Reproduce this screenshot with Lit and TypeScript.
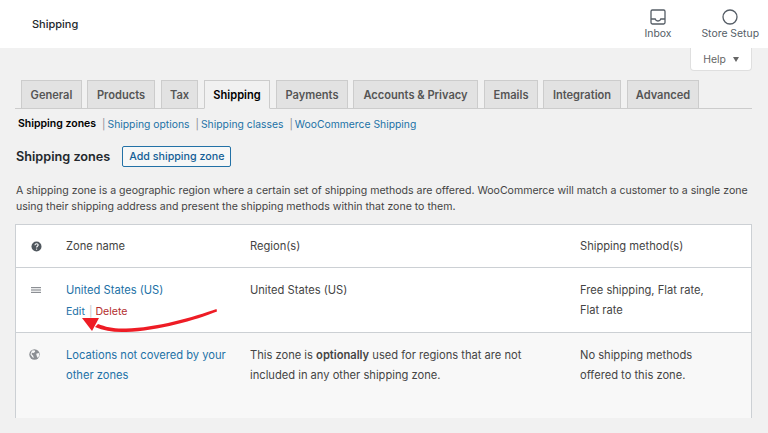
import { LitElement, html, css } from "lit";
import { customElement } from "lit/decorators.js";

@customElement("app-root")
export class AppRoot extends LitElement {
  static styles = css`
    :host { display: block; width: 768px; height: 433px; overflow: hidden; position: relative; background: #f1f1f1; font-family: Inter, "Liberation Sans", sans-serif; font-size: 11.15px; color: #444; -webkit-font-smoothing: antialiased; }
    a { color: #2271a6; text-decoration: none; }
    .top { height: 48px; background: #fff; display: flex; align-items: flex-start; padding-left: 32px; box-sizing: border-box; }
    .title { font-size: 11px; font-weight: 500; color: #23282d; margin-top: 17px; line-height: 14px; flex: 1; }
    .act { display: flex; flex-direction: column; align-items: center; color: #555d66; font-size: 10.4px; line-height: 13px; padding-top: 9px; gap: 2px; }
    .act svg { display: block; width: 16px; height: 16px; }
    .inbox { margin-right: 30px; }
    .setup { margin-right: 9px; }
    .helpwrap { display: flex; justify-content: flex-end; padding-right: 16px; height: 32px; }
    .help { width: 62px; height: 23px; box-sizing: border-box; background: #fff; border: 1px solid #dfdfdf; border-top: 0; border-radius: 0 0 4px 4px; display: flex; align-items: center; justify-content: center; gap: 7px; color: #666; font-size: 10.4px; }
    .caret { width: 0; height: 0; border-left: 3.5px solid transparent; border-right: 3.5px solid transparent; border-top: 5px solid #666; }
    .tabs { display: flex; margin: 0 16px 0 15px; padding-left: 6px; border-bottom: 1px solid #ccc; height: 28px; }
    .tab { height: 28px; box-sizing: border-box; background: #e2e2e2; border: 1px solid #ccc; border-bottom: 0; display: flex; align-items: center; justify-content: center; color: #555; font-size: 11.1px; font-weight: 600; }
    .tab.on { background: #f1f1f1; color: #000; height: 29px; border-bottom: 1px solid #f1f1f1; }
    .sub { display: flex; margin: 8px 0 0 18px; font-size: 10.35px; line-height: 14px; white-space: nowrap; }
    .sub b { font-weight: 600; color: #000; font-size: 10.5px; }
    .sep { color: #8c8f94; margin: 0 2px 0 6px; }
    .h { display: flex; align-items: center; margin: 15px 0 0 16px; gap: 12px; height: 21px; }
    .h h2 { margin: 0; font-size: 12.7px; font-weight: 600; color: #23282d; }
    .btn { height: 21px; box-sizing: border-box; width: 109px; border: 1px solid #2271a6; border-radius: 2px; background: #f6f7f7; color: #135e96; font-size: 10.7px; font-weight: 500; display: flex; align-items: center; justify-content: center; }
    .p { margin: 16px 16px 0 16px; font-size: 10.55px; line-height: 15.5px; white-space: nowrap; }
    .table { margin: 10px 16px 0 15px; height: 194px; box-sizing: border-box; border: 1px solid #ccd0d4; background: #fff; }
    .row { display: grid; grid-template-columns: 50px 184px 330px 1fr; }
    .row > div { box-sizing: border-box; }
    .head { height: 42px; align-items: center; border-bottom: 1px solid #ccd0d4; }
    .ic { padding-left: 15px; display: flex; }
    .ic svg { display: block; }
    .us { height: 65px; border-bottom: 1px solid #ccd0d4; line-height: 20px; padding-top: 12px; box-sizing: border-box; }
    .rows { font-size: 10.6px; margin-top: 5px; line-height: 14px; display: flex; align-items: center; }
    .rows i { font-style: normal; color: #c3c4c7; margin: 0 3px 0 4px; }
    .rows .del { color: #b32d2e; }
    .rest { height: 85px; background: #f8f8f8; line-height: 19.6px; padding-top: 13px; box-sizing: border-box; }
    .rest b { font-weight: 600; }
    .nw { white-space: nowrap; }
    .menu { padding-top: 7px; align-items: flex-start; }
    .globe { padding-left: 13px; padding-top: 3px; align-items: flex-start; }
    .arrow { position: absolute; left: 76px; top: 305px; width: 145px; height: 30px; pointer-events: none; }
  `;

  render() {
    const tabs: [string, number, number][] = [["General",61,5],["Products",68,6],["Tax",37,6],["Shipping",66,6],["Payments",72,5],["Accounts & Privacy",125,6],["Emails",54,5],["Integration",78,6],["Advanced",72,0]];
    return html`
      <div class="top">
        <div class="title">Shipping</div>
        <div class="act inbox">
          <svg viewBox="0 0 16 16" fill="none" stroke="#555d66" stroke-width="1.3"><rect x="1" y="1" width="14" height="14" rx="1.4"/><path d="M1 10h4.2c.4 1.3 1.5 2 2.8 2s2.4-.7 2.8-2H15"/></svg>
          <span>Inbox</span>
        </div>
        <div class="act setup">
          <svg viewBox="0 0 16 16" fill="none" stroke="#555d66" stroke-width="1.3"><circle cx="8" cy="8" r="7"/></svg>
          <span>Store Setup</span>
        </div>
      </div>
      <div class="helpwrap"><div class="help"><span>Help</span><span class="caret"></span></div></div>
      <div class="tabs">
        ${tabs.map(([t,w,g])=>html`<div class="tab ${t==="Shipping"?"on":""}" style="width:${w}px;margin-right:${g}px">${t}</div>`)}
      </div>
      <div class="sub">
        <b>Shipping zones</b><span class="sep">|</span><a>Shipping options</a><span class="sep">|</span><a>Shipping classes</a><span class="sep">|</span><a>WooCommerce Shipping</a>
      </div>
      <div class="h"><h2>Shipping zones</h2><div class="btn">Add shipping zone</div></div>
      <div class="p">A shipping zone is a geographic region where a certain set of shipping methods are offered. WooCommerce will match a customer to a single zone<br>using their shipping address and present the shipping methods within that zone to them.</div>
      <div class="table">
        <div class="row head">
          <div class="ic"><svg width="11" height="11" viewBox="0 0 11 11"><circle cx="5.5" cy="5.5" r="5" fill="#50575e"/><path d="M3.9 4.2c.1-1 .8-1.5 1.7-1.5s1.6.6 1.6 1.4c0 1.2-1.6 1.2-1.6 2.4" fill="none" stroke="#fff" stroke-width="1.1"/><circle cx="5.6" cy="8.1" r=".7" fill="#fff"/></svg></div>
          <div>Zone name</div><div>Region(s)</div><div>Shipping method(s)</div>
        </div>
        <div class="row us">
          <div class="ic menu"><svg width="10" height="6" viewBox="0 0 10 6" fill="#8c8f94"><rect width="10" height="1.2"/><rect y="2.4" width="10" height="1.2"/><rect y="4.8" width="10" height="1.2"/></svg></div>
          <div><a>United States (US)</a><div class="rows"><a>Edit</a><i>|</i><a class="del">Delete</a></div></div>
          <div>United States (US)</div>
          <div>Free shipping, Flat rate,<br>Flat rate</div>
        </div>
        <div class="row rest">
          <div class="ic globe"><svg width="11" height="11" viewBox="0 0 11 11"><circle cx="5.5" cy="5.5" r="5.2" fill="#8c8f94"/><path d="M3 1.6l2.6-.4.6 1.5-1.6 1.4-1.3-.4-.9 1.4 1.8 1.6.6 2.2-1.4-.6-2-3zM7.2 4.7l2.6-.7.6 2.6-1.6 2.4-1-1.7z" fill="#f8f8f8"/></svg></div>
          <div><a class="nw">Locations not covered by your</a><br><a>other zones</a></div>
          <div class="nw">This zone is <b>optionally</b> used for regions that are not<br>included in any other shipping zone.</div>
          <div class="nw">No shipping methods<br>offered to this zone.</div>
        </div>
      </div>
      <svg class="arrow" viewBox="0 0 145 30"><path d="M140.5 4 C118 12 80 23 50 23.5 C38 24 30 22 22 19 L19 22 C28 26 38 27.5 50 27 C82 26 120 15 141 6.5 Z" fill="#ee1c25"/><path d="M6 13 L23 13 L16 26 Z" fill="#ee1c25"/></svg>
    `;
  }
}
